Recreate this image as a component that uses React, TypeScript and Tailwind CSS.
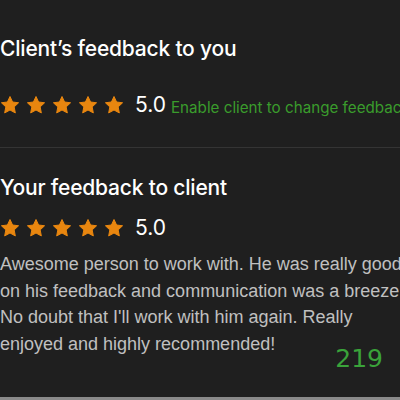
import React from "react";

const Star = () => (
  <svg viewBox="0 0 24 24" className="h-[20px] w-[20px]" fill="#e8860f">
    <path
      d="M12 1.8l3.1 6.6 7.2.9-5.3 5 1.4 7.2L12 18l-6.4 3.5 1.4-7.2-5.3-5 7.2-.9z"
      stroke="#e8860f"
      strokeWidth="1.2"
      strokeLinejoin="round"
    />
  </svg>
);

const Rating = ({ value }: { value: string }) => (
  <div className="flex items-center gap-[6px]">
    <Star />
    <Star />
    <Star />
    <Star />
    <Star />
    <span className="ml-[5px] text-[21px] leading-none text-white">{value}</span>
  </div>
);

export default function App() {
  return (
    <div
      className="relative h-[400px] w-[400px] overflow-hidden bg-[#1f1f1f]"
      style={{ fontFamily: 'Inter, "Liberation Sans", sans-serif' }}
    >
      {/* Client's feedback */}
      <section className="pt-[35px] pb-[32px]">
        <h2 className="text-[21px] font-medium leading-[28px] tracking-[-0.2px] text-white">
          Client’s feedback to you
        </h2>
        <div className="mt-[31px] flex items-end whitespace-nowrap">
          <Rating value="5.0" />
          <span className="ml-[5px] text-[15.2px] leading-none text-[#3a9c2c]">
            Enable client to change feedback
          </span>
        </div>
      </section>

      <div className="border-t border-[#343434]" />

      {/* Your feedback */}
      <section className="pt-[26px]">
        <h2 className="text-[21px] font-medium leading-[28px] tracking-[-0.2px] text-white">
          Your feedback to client
        </h2>
        <div className="mt-[15px]">
          <Rating value="5.0" />
        </div>
        <p
          className="mt-[13px] w-[406px] text-[18px] leading-[26.5px] text-[#c0c0c0]"
          style={{ fontFamily: '"Liberation Sans", Arial, sans-serif' }}
        >
          Awesome person to work with. He was really good on his feedback and
          communication was a breeze. No doubt that I'll work with him again.
          Really enjoyed and highly recommended!
        </p>
        <div className="-mt-[11px] flex justify-end pr-[17px]">
          <span
            className="text-[25px] leading-none text-[#3aa33a]"
            style={{ fontFamily: '"DejaVu Sans", sans-serif' }}
          >
            219
          </span>
        </div>
      </section>

      <div className="absolute bottom-0 left-0 right-0 h-[3px] bg-[#8a8a8a]" />
    </div>
  );
}
